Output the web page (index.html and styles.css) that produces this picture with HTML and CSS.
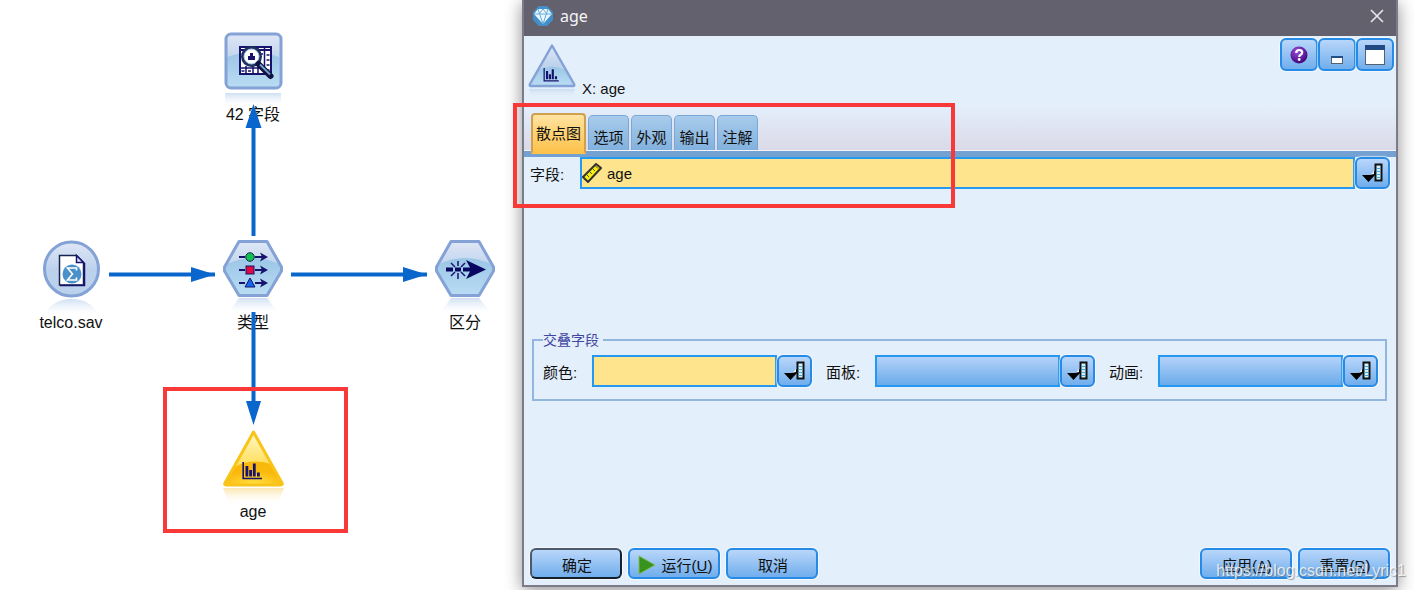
FILE: index.html
```
<!DOCTYPE html>
<html lang="zh-CN">
<head>
    <meta charset="UTF-8">
    <meta name="viewport" content="width=device-width, initial-scale=1.0">
    <title>age</title>
    <link rel="stylesheet" href="styles.css">
</head>
<body>

    <!-- shared gradients and symbols -->
    <svg class="defs" aria-hidden="true">
        <defs>
            <linearGradient id="blue" x1="0" y1="0" x2="0" y2="1">
                <stop offset="0" stop-color="#dfe7f6"/>
                <stop offset="0.5" stop-color="#bdd2ec"/>
                <stop offset="1" stop-color="#bcd3ee"/>
            </linearGradient>
            <linearGradient id="pool" x1="0" y1="0" x2="0" y2="1">
                <stop offset="0" stop-color="#9bc6e6"/>
                <stop offset="1" stop-color="#b9dcf3"/>
            </linearGradient>
            <linearGradient id="gold" x1="0" y1="0" x2="0" y2="1">
                <stop offset="0" stop-color="#fff8c8"/>
                <stop offset="1" stop-color="#ffd018"/>
            </linearGradient>
            <radialGradient id="gold-pool" cx="0.5" cy="1" r="0.6">
                <stop offset="0" stop-color="#ffe040"/>
                <stop offset="1" stop-color="#fbb80c"/>
            </radialGradient>
            <linearGradient id="mirror" x1="0" y1="0" x2="0" y2="1">
                <stop offset="0" stop-color="#c4d8ee" stop-opacity="0.8"/>
                <stop offset="1" stop-color="#e6f0fa" stop-opacity="0"/>
            </linearGradient>
            <linearGradient id="mirror-gold" x1="0" y1="0" x2="0" y2="1">
                <stop offset="0" stop-color="#f8dc90" stop-opacity="0.7"/>
                <stop offset="1" stop-color="#fff4d8" stop-opacity="0"/>
            </linearGradient>
            <radialGradient id="purple" cx="0.4" cy="0.3" r="0.7">
                <stop offset="0" stop-color="#9a50d8"/>
                <stop offset="1" stop-color="#42047c"/>
            </radialGradient>
        </defs>
        <symbol id="bars" viewBox="0 0 20 18">
            <path d="M1.2 0V16.5H20" fill="none" stroke="#17126e" stroke-width="1.6"/>
            <path d="M3.500 4h2.800v10.500H3.500zM7.200 8h2.800v6.500H7.200zM10.900 1.500h2.800v13h-2.800zM15 10.500h2.800v4H15z" fill="#17126e"/>
        </symbol>
        <symbol id="hexagon" viewBox="0 0 64 76">
            <path d="M8 74L18 60H46L57 74z" fill="url(#mirror)"/>
            <path d="M18 3.500H46L60.500 29V33L46 57.500H18L3.500 33V29z" fill="url(#blue)"/>
            <path d="M6 26Q32 14 58 26L60.500 29V33L46 57.500H18L3.500 33V29z" fill="url(#pool)"/>
            <path d="M18 3.500H46L60.500 29V33L46 57.500H18L3.500 33V29z" fill="none" stroke="#84a2d6" stroke-width="3" stroke-linejoin="round"/>
        </symbol>
        <symbol id="picker" viewBox="0 0 22 20">
            <path d="M0 12h8l5-4v4l-6.500 7z" fill="#000"/>
            <path d="M8 12l4-4v3z" fill="#e4f2ff"/>
            <rect x="13.500" y="1.500" width="6" height="16" fill="#d0f4ff" stroke="#111" stroke-width="2"/>
            <path d="M14.500 5.500h4M14.500 8.500h4M14.500 11.500h4M14.500 14.500h4" stroke="#4aa5d0"/>
        </symbol>
    </svg>

    <div class="workspace">
        <main class="canvas">
            <div class="node node-fields">
                <svg class="node-icon" viewBox="0 0 64 76">
                    <path d="M4 63h56v12H4z" fill="url(#mirror)"/>
                    <rect x="4.500" y="3.500" width="55" height="55" rx="5" fill="url(#blue)"/>
                    <path d="M6 27Q32 18 58 27V57H6z" fill="url(#pool)"/>
                    <rect x="5" y="4" width="55" height="54" rx="5" fill="none" stroke="#84a2d6" stroke-width="3"/>
                    <rect x="19" y="17" width="31" height="27" fill="#fff" stroke="#17126e" stroke-width="2"/>
                    <path d="M19 20h31" stroke="#17126e" stroke-width="2"/>
                    <path d="M25 36v8M32 36v8M37 17v27M43.500 17v27M19 38h24" stroke="#17126e" stroke-width="1.500"/>
                    <path d="M45.500 25h3M45.500 30h3M45.500 35h3M45.500 40h3M20.500 41h3M27 41h3M20.500 24h3M39 24h3" stroke="#17126e" stroke-width="1.500"/>
                    <circle cx="30.500" cy="26.500" r="9" fill="#fff" stroke="#1d2f5c" stroke-width="3"/>
                    <circle cx="30.500" cy="26.500" r="7.500" fill="none" stroke="#a8cdea"/>
                    <path d="M27 30v-4h2v-3h3v3h2v4z" fill="#17126e"/>
                    <path d="M37.500 34L49.500 46" stroke="#101040" stroke-width="6" stroke-linecap="round"/>
                    <path d="M39 34.500L49 44.500" stroke="#6fa2cb" stroke-width="2"/>
                </svg>
                <span class="node-label">42 字段</span>
            </div>

            <div class="node node-source">
                <svg class="node-icon" viewBox="0 0 64 76">
                    <path d="M6 76Q14 61 32.500 61T59 76z" fill="url(#mirror)"/>
                    <circle cx="32.500" cy="31" r="27" fill="url(#blue)"/>
                    <path d="M6 34Q32 22 59 34Q56 57 32.500 58Q9 57 6 34z" fill="#bcd2ec"/>
                    <circle cx="32.500" cy="31" r="27" fill="none" stroke="#84a2d6" stroke-width="3"/>
                    <path d="M20.500 17.500h17l7 7V47h-24z" fill="#fff" stroke="#17254e" stroke-width="1.500"/>
                    <path d="M37.500 17.500v7h7z" fill="#dbe7fa" stroke="#17126e" stroke-width="1.500"/>
                    <path d="M21 47.500h24.500V25" fill="none" stroke="#17126e" stroke-width="1.500"/>
                    <circle cx="33" cy="36" r="9.500" fill="#4b91c9"/>
                    <path d="M37.500 32.500v-2.500h-9l5 6-5 6h9v-2.500" fill="none" stroke="#fff" stroke-width="1.600"/>
                </svg>
                <span class="node-label">telco.sav</span>
            </div>

            <div class="node node-type">
                <svg class="node-icon" viewBox="0 0 64 76">
                    <use href="#hexagon"/>
                    <path d="M18 19h6M18 32h6M18 45h6M34 19h11M34 32h11M34 45h11" stroke="#17126e" stroke-width="2"/>
                    <path d="M39 14.500l8 4.500-8 4.500 2-4.500zM39 27.500l8 4.500-8 4.500 2-4.500zM39 40.500l8 4.500-8 4.500 2-4.500z" fill="#17126e"/>
                    <circle cx="29" cy="19" r="4.300" fill="#10c050" stroke="#17254e"/>
                    <rect x="25" y="28" width="8" height="8" fill="#e00840" stroke="#17126e"/>
                    <path d="M29 40l5 9H24z" fill="#1468e8" stroke="#17126e"/>
                </svg>
                <span class="node-label">类型</span>
            </div>

            <div class="node node-model">
                <svg class="node-icon" viewBox="0 0 64 76">
                    <use href="#hexagon"/>
                    <path d="M13 31.500h7M22 31.500h6M30 31.500h12" stroke="#070761" stroke-width="4"/>
                    <path d="M33 22L53 31.500 33 41l5-9.500z" fill="#070761"/>
                    <path d="M25 23v5M25 35v6M18 25l4 4M32 25l-4 4M18 38l4-4M32 38l-4-4" stroke="#17126e" stroke-width="1.500"/>
                </svg>
                <span class="node-label">区分</span>
            </div>

            <div class="node node-plot">
                <svg class="node-icon" viewBox="0 0 64 76">
                    <path d="M2 61h61l-6 15H8z" fill="url(#mirror-gold)"/>
                    <path d="M32.500 5L61 56q1 2-2 2H6q-3 0-2-2z" fill="url(#gold)"/>
                    <path d="M14 40Q30 31 50 37L60 57H5z" fill="url(#gold-pool)"/>
                    <path d="M32.500 5L61 56q1 2-2 2H6q-3 0-2-2z" fill="none" stroke="#f9c41a" stroke-width="3" stroke-linejoin="round"/>
                    <use href="#bars" x="21" y="35" width="20" height="18"/>
                </svg>
                <span class="node-label">age</span>
            </div>

            <svg class="links" viewBox="0 0 522 590">
                <path d="M253.500 236V120M109 274.500H215M291 274.500H427M253.500 312V410" fill="none" stroke="#0866cd" stroke-width="4"/>
                <path d="M253.500 104l8 24h-16zM215 274.500l-24 7.500v-15zM427 274.500l-24 7.500v-15zM253.500 425l-7.500-24h15z" fill="#0866cd"/>
            </svg>
            <div class="highlight highlight-node"></div>
        </main>

        <form class="dialog" onsubmit="return false">
            <div class="title-bar">
                <svg class="title-icon" viewBox="0 0 22 22">
                    <path d="M7 1h8l6 6v8l-6 6H7l-6-6V7z" fill="#438fca"/>
                    <path d="M6 4h10l4 5-9 10L2 9z" fill="#eaf7ff"/>
                    <path d="M2 9h18M6 4l5 15 5-15M7 9l4-5 4 5" fill="none" stroke="#68a9d8"/>
                </svg>
                <span class="title-text">age</span>
                <button type="button" class="close-btn" aria-label="关闭">
                    <svg width="14" height="14" viewBox="0 0 14 14"><path d="M1 1l12 12M13 1L1 13" stroke="#e8e8ec" stroke-width="1.600"/></svg>
                </button>
            </div>

            <div class="dialog-head">
                <div class="summary">
                    <svg class="summary-icon" viewBox="0 0 48 56">
                        <path d="M1 46h46l-3 9H4z" fill="url(#mirror)"/>
                        <path d="M24 2.500L46 41q1 2-1 2H3q-2 0-1-2z" fill="url(#blue)"/>
                        <path d="M11 27Q24 20 37 27L46 42H2z" fill="url(#pool)"/>
                        <path d="M24 2.500L46 41q1 2-1 2H3q-2 0-1-2z" fill="none" stroke="#84a2d6" stroke-width="2.500" stroke-linejoin="round"/>
                        <use href="#bars" x="15" y="25" width="16" height="14"/>
                    </svg>
                    <span class="summary-text">X: age</span>
                    <div class="window-btns">
                        <button type="button" class="window-btn" aria-label="帮助">
                            <svg width="18" height="18" viewBox="0 0 18 18">
                                <circle cx="9" cy="9" r="8.500" fill="url(#purple)"/>
                                <path d="M6.200 7q0-3 3-3t3 2.600q0 1.400-1.500 2.200T9.200 11" fill="none" stroke="#fff" stroke-width="2.200"/>
                                <circle cx="9.200" cy="13.500" r="1.400" fill="#fff"/>
                            </svg>
                        </button>
                        <button type="button" class="window-btn" aria-label="最小化">
                            <svg width="22" height="22" viewBox="0 0 22 22">
                                <rect x="5.500" y="12.500" width="11" height="7" fill="#fff" stroke="#54616e"/>
                                <path d="M5 13h12" stroke="#234f86" stroke-width="2"/>
                            </svg>
                        </button>
                        <button type="button" class="window-btn" aria-label="最大化">
                            <svg width="22" height="22" viewBox="0 0 22 22">
                                <rect x="1.500" y="1.500" width="19" height="19" fill="#fff" stroke="#54616e"/>
                                <path d="M1 3.500h20" stroke="#204b85" stroke-width="5"/>
                            </svg>
                        </button>
                    </div>
                </div>
                <div class="tabs" role="tablist">
                    <button type="button" class="tab active" role="tab" aria-selected="true">散点图</button>
                    <button type="button" class="tab" role="tab">选项</button>
                    <button type="button" class="tab" role="tab">外观</button>
                    <button type="button" class="tab" role="tab">输出</button>
                    <button type="button" class="tab" role="tab">注解</button>
                </div>
            </div>

            <div class="field-row">
                <label for="field">字段:</label>
                <div class="field-box required">
                    <svg class="ruler" viewBox="0 0 20 20">
                        <path d="M1 14L14 1l5 4L6 19z" fill="#f8ef10" stroke="#333" stroke-width="2"/>
                        <path d="M4.500 11.500l2.500 2.500M7.500 8.500l2.500 2.500M10.500 5.500l2.500 2.500M13.500 3l2.500 2.500" stroke="#55501c"/>
                    </svg>
                    <input type="text" id="field" value="age">
                </div>
                <button type="button" class="picker-btn" aria-label="选择字段"><svg class="picker-icon"><use href="#picker"/></svg></button>
            </div>

            <fieldset class="overlay">
                <legend>交叠字段</legend>
                <div class="overlay-row">
                    <div class="overlay-field">
                        <label for="color">颜色:</label>
                        <div class="field-box required"><input type="text" id="color"></div>
                        <button type="button" class="picker-btn" aria-label="选择颜色字段"><svg class="picker-icon"><use href="#picker"/></svg></button>
                    </div>
                    <div class="overlay-field">
                        <label for="panel">面板:</label>
                        <div class="field-box"><input type="text" id="panel"></div>
                        <button type="button" class="picker-btn" aria-label="选择面板字段"><svg class="picker-icon"><use href="#picker"/></svg></button>
                    </div>
                    <div class="overlay-field">
                        <label for="animation">动画:</label>
                        <div class="field-box"><input type="text" id="animation"></div>
                        <button type="button" class="picker-btn" aria-label="选择动画字段"><svg class="picker-icon"><use href="#picker"/></svg></button>
                    </div>
                </div>
            </fieldset>

            <div class="actions">
                <button type="submit" class="btn default">确定</button>
                <button type="button" class="btn">
                    <svg width="18" height="20" viewBox="0 0 18 20"><path d="M1 1l16 9-16 9z" fill="#36931b" stroke="#80ba58"/></svg>
                    <span>运行(<u>U</u>)</span>
                </button>
                <button type="button" class="btn">取消</button>
                <button type="button" class="btn apply"><span>应用(<u>A</u>)</span></button>
                <button type="button" class="btn"><span>重置(<u>R</u>)</span></button>
            </div>

            <div class="highlight highlight-field"></div>
        </form>

        <div class="watermark">https://blog.csdn.net/Lyric1</div>
    </div>

</body>
</html>
```
FILE: styles.css
```
* {
    box-sizing: border-box;
}

body {
    font-family: "Liberation Sans", "Noto Sans CJK SC", sans-serif;
    font-size: 15px;
    color: #111;
    background: #fff;
    margin: 0;
}

button, input {
    font: inherit;
    color: inherit;
}

button {
    padding: 0;
    cursor: pointer;
}

.defs {
    position: absolute;
    width: 0;
    height: 0;
}

.workspace {
    position: relative;
    display: flex;
    min-height: 100vh;
    padding: 0 16px 3px 0;
    overflow: hidden;
}

/* stream canvas */
.canvas {
    position: relative;
    flex: 0 0 522px;
}

.node {
    position: absolute;
    width: 100px;
    display: flex;
    flex-direction: column;
    align-items: center;
}

.node-icon {
    width: 64px;
    height: 76px;
}

.node-label {
    font-size: 16px;
    line-height: 18px;
}

.node-fields {
    left: 203px;
    top: 30px;
}

.node-source {
    left: 21px;
    top: 238px;
}

.node-type {
    left: 203px;
    top: 238px;
}

.node-model {
    left: 415px;
    top: 238px;
}

.node-plot {
    left: 203px;
    top: 427px;
}

.links {
    position: absolute;
    left: 0;
    top: 0;
    width: 522px;
    height: 590px;
}

.highlight {
    position: absolute;
    border: 4px solid #f93838;
    pointer-events: none;
}

.highlight-node {
    left: 163px;
    top: 387px;
    width: 185px;
    height: 146px;
}

.highlight-field {
    left: -11px;
    top: 103px;
    width: 442px;
    height: 105px;
}

/* dialog */
.dialog {
    position: relative;
    flex: 1;
    min-width: 0;
    display: flex;
    flex-direction: column;
    background: #e4effc;
    border: 2px solid #7c7b8c;
    border-top: none;
    box-shadow: 0 3px 16px rgba(0, 0, 0, 0.45);
}

.title-bar {
    display: flex;
    align-items: center;
    height: 36px;
    padding: 0 12px 4px 8px;
    background: #64616e;
    color: #f4f4f6;
}

.title-icon {
    width: 22px;
    height: 22px;
}

.title-text {
    margin-left: 6px;
    font-family: "Noto Sans", sans-serif;
    font-size: 16px;
}

.close-btn {
    display: flex;
    margin-left: auto;
    background: none;
    border: none;
}

.dialog-head {
    background: linear-gradient(#e4effc 60%, #dad9e7);
    border-bottom: 6px solid #73a2d2;
}

.summary {
    display: flex;
    height: 77px;
    padding: 2px 2px 0 4px;
}

.summary-icon {
    width: 48px;
    height: 56px;
    margin-top: 5px;
}

.summary-text {
    margin: 42px 0 0 6px;
    line-height: 18px;
}

.window-btns {
    display: flex;
    margin-left: auto;
}

.window-btn, .picker-btn, .btn {
    display: flex;
    align-items: center;
    justify-content: center;
    background: linear-gradient(#b9d6fa, #70aeec);
    border: 2px solid #268be6;
    border-radius: 6px;
    box-shadow: 0 0 1px 1px #fff9;
}

.window-btn {
    width: 38px;
    height: 33px;
}

.tabs {
    display: flex;
    align-items: flex-end;
    gap: 2px;
    height: 38px;
    padding-left: 7px;
    border-bottom: 1px solid #f4f5fb;
}

.tab {
    width: 41px;
    height: 35px;
    padding-top: 6px;
    background: linear-gradient(#a8cbeb, #82b1de);
    border: 1px solid #78a7d8;
    border-bottom: none;
    border-radius: 5px 5px 0 0;
}

.tab.active {
    width: 55px;
    height: 41px;
    margin-bottom: -4px;
    padding: 0 0 2px;
    background: linear-gradient(#ffe3a0, #fcc24c);
    border: 2px solid #cfa050;
    border-bottom-color: #fcc24c;
    border-radius: 4px 4px 0 0;
}

.field-row {
    display: flex;
    align-items: center;
    padding: 0 6px;
}

.field-row label {
    width: 50px;
}

.field-box {
    flex: 1;
    min-width: 0;
    display: flex;
    align-items: center;
    height: 32px;
    background: linear-gradient(#b4d2f9, #6aabea);
    border: 2px solid #2598f2;
}

.field-box.required {
    background: #fee58d;
}

.field-box input {
    width: 100%;
    min-width: 0;
    padding: 0 5px;
    background: none;
    border: none;
    outline: none;
}

.ruler {
    flex: none;
    width: 20px;
    height: 20px;
}

.picker-btn {
    width: 35px;
    height: 32px;
}

.picker-icon {
    width: 22px;
    height: 20px;
}

.overlay {
    margin: 142px 9px 0 8px;
    padding: 6px 7px 12px 9px;
    min-width: 0;
    border: 2px solid #93b6de;
}

.overlay legend {
    padding: 0 4px 0 0;
    font-size: 14px;
    line-height: 18px;
    color: #3f479f;
}

.overlay-row {
    display: flex;
    gap: 14px;
}

.overlay-field {
    flex: 1;
    min-width: 0;
    display: flex;
    align-items: center;
}

.overlay-field label {
    width: 49px;
}

.actions {
    display: flex;
    gap: 6px;
    margin-top: auto;
    padding: 16px 6px 6px;
}

.btn {
    width: 92px;
    height: 31px;
    gap: 6px;
    padding: 2px 0 0 2px;
    white-space: nowrap;
}

.btn.default {
    border-color: #4d5968 #15202c #15202c #4d5968;
}

.btn.apply {
    margin-left: auto;
}

.watermark {
    position: absolute;
    right: 8px;
    bottom: 9px;
    font-size: 16px;
    line-height: 20px;
    color: rgba(255, 255, 255, 0.8);
    text-shadow: 1px 1px 1px rgba(80, 80, 80, 0.5);
    pointer-events: none;
}
```
